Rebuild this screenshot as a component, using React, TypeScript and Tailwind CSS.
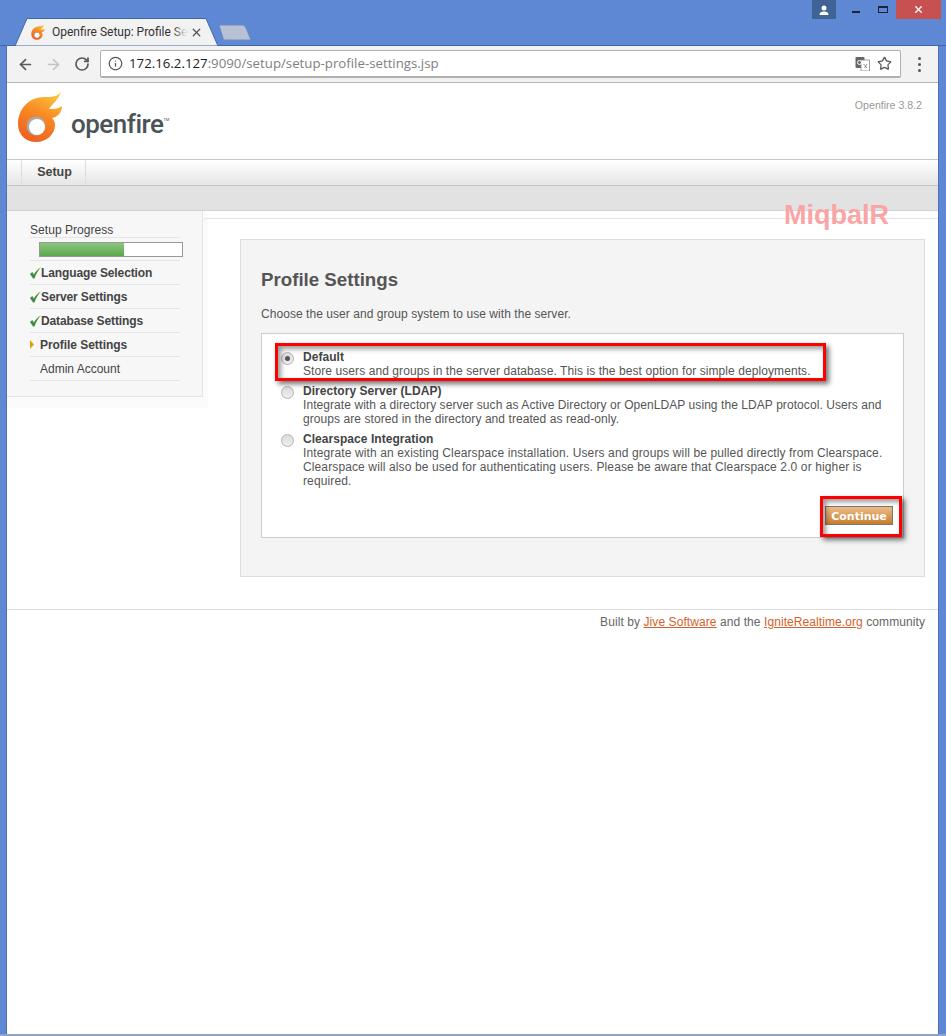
import { ArrowLeft, ArrowRight, RotateCw, Info, Star, X } from "lucide-react";

function Flame({ size = 46 }: { size?: number }) {
  return (
    <svg width={size} height={(size * 53) / 46} viewBox="17 90 46 53">
      <defs>
        <linearGradient id="fl" x1="0.7" y1="0" x2="0.3" y2="1">
          <stop offset="0" stopColor="#fdc43c" />
          <stop offset="0.45" stopColor="#f78a24" />
          <stop offset="1" stopColor="#ef5f22" />
        </linearGradient>
      </defs>
      <path
        fill="url(#fl)"
        d="M61 91C59 97 51 97 44 97C29 97 18 109 18 124C18 135 26 142 36 142C47 142 55 134 55 125C55 122 54 120 52 118C58 117 62 112 62 106C58 109 53 109 49 109C52 104 59 100 61 91Z"
      />
      <circle cx="36" cy="126" r="9.5" fill="#a9a9a9" />
      <circle cx="37" cy="127" r="8" fill="#ffffff" />
    </svg>
  );
}

function Check() {
  return (
    <svg width="11" height="12" viewBox="0 0 11 12" className="flex-none">
      <path d="M0 7L2.200 5L4 7.500C5.500 4.500 8 2 11 0.500C8 3.500 6 7 4.500 11.500H3Z" fill="#3f8f3f" />
    </svg>
  );
}

function Row({ label, state }: { label: string; state: "done" | "current" | "todo" }) {
  return (
    <div className="flex h-[24px] items-center border-b border-[#e4e4e4] text-[12px] text-[#444]">
      {state === "done" && (
        <div className="flex items-center">
          <Check />
          <span className="font-bold tracking-[-0.12px]">{label}</span>
        </div>
      )}
      {state === "current" && (
        <div className="flex items-center">
          <svg width="10" height="9" viewBox="0 0 10 9" className="flex-none">
            <path d="M0 0L4 4.500L0 9Z" fill="#d9a20b" />
          </svg>
          <span className="font-bold tracking-[-0.05px]">{label}</span>
        </div>
      )}
      {state === "todo" && <span className="pl-[10px]">{label}</span>}
    </div>
  );
}

function Radio({ on }: { on?: boolean }) {
  return (
    <div className="mt-[2px] flex h-[13px] w-[13px] flex-none items-center justify-center rounded-full border border-[#b4b4b4] bg-gradient-to-b from-[#dcdcdc] to-[#eeeeee]">
      {on && <div className="h-[5px] w-[5px] rounded-full bg-[#555]" />}
    </div>
  );
}

function Option({
  on,
  title,
  spacing,
  children,
}: {
  on?: boolean;
  title: string;
  spacing: string;
  children: React.ReactNode;
}) {
  return (
    <div className="flex gap-[9px]">
      <Radio on={on} />
      <div className={`w-[584px] text-[12px] leading-[14px] text-[#555] ${spacing}`}>
        <div className="font-bold tracking-[0.05px] text-[#444]">{title}</div>
        {children}
      </div>
    </div>
  );
}

export default function App() {
  return (
    <div className="relative flex h-[1036px] w-[946px] flex-col overflow-hidden bg-[#5f88d4] font-['Liberation_Sans',Arial,sans-serif]">
      {/* Title bar */}
      <div className="flex h-[46px] flex-none items-start border-b border-[#3f68a8]">
        <div className="relative ml-[15px] mt-[18px] flex h-[28px] w-[203px] flex-none items-center pl-[16px] pr-[15px]">
          <svg className="absolute inset-0" width="203" height="28" viewBox="0 0 203 28">
            <path d="M0 28L12 0.5H191L203 28Z" fill="#f2f2f2" stroke="#3f68a8" />
          </svg>
          <div className="relative flex-none">
            <Flame size={14} />
          </div>
          <div className="relative ml-[7px] whitespace-nowrap font-['Roboto',sans-serif] text-[12px] text-[#333]">
            Openfire Setup: Profile Se
            <div className="absolute inset-y-0 right-0 w-[14px] bg-gradient-to-r from-transparent to-[#f2f2f2]" />
          </div>
          <X size={13} strokeWidth={2.4} className="relative ml-auto text-[#555]" />
        </div>
        <svg className="mt-[24px] flex-none" width="34" height="17" viewBox="0 0 34 17">
          <path d="M1 1H24C26 1 27 2 28 4L33 16H7C6 16 5.500 15 5 14Z" fill="#b7c1d6" stroke="#6f8ab8" />
        </svg>
        <div className="ml-auto mr-[5px] flex items-start">
          <div className="flex h-[19px] w-[24px] items-center justify-center bg-[#3f6297]">
            <svg width="10" height="10" viewBox="0 0 10 10">
              <circle cx="5" cy="3" r="2.500" fill="#fff" />
              <path d="M0.500 10C0.500 7 3 6.500 5 6.500C7 6.500 9.500 7 9.500 10Z" fill="#fff" />
            </svg>
          </div>
          <div className="ml-[16px] mt-[11px] h-[2px] w-[8px] bg-[#1a2438]" />
          <div className="ml-[18px] mt-[6px] h-[7px] w-[10px] border border-t-2 border-[#1a2438]" />
          <div className="ml-[8px] flex h-[19px] w-[45px] items-center justify-center bg-[#c75050]">
            <X size={11} strokeWidth={3} className="text-white" />
          </div>
        </div>
      </div>

      {/* Window */}
      <div className="ml-[7px] mr-[8px] flex flex-1 flex-col bg-white shadow-[-1px_0_0_#4a72b4,1px_0_0_#4a72b4]">
        {/* Toolbar */}
        <div className="flex h-[37px] flex-none items-center border-b border-[#b5b5b5] bg-[#f2f2f2]">
          <ArrowLeft size={17} strokeWidth={2.4} className="ml-[10px] text-[#5a5a5a]" />
          <ArrowRight size={17} strokeWidth={2.4} className="ml-[11px] text-[#c4c4c4]" />
          <RotateCw size={16} strokeWidth={2.6} className="ml-[12px] text-[#5a5a5a]" />
          <div className="ml-[10px] flex h-[28px] w-[801px] flex-none items-center rounded-[2px] border border-b-2 border-[#b0b0b0] bg-white pl-[7px] pr-[6px]">
            <Info size={15} strokeWidth={2} className="text-[#555]" />
            <span className="ml-[6px] whitespace-nowrap font-['Open_Sans',sans-serif] text-[13.25px] text-[#222]">
              172.16.2.127<span className="text-[#808080]">:9090/setup/setup-profile-settings.jsp</span>
            </span>
            <svg className="ml-auto" width="15" height="14" viewBox="0 0 15 14">
              <rect x="0.500" y="0" width="9" height="11" rx="1" fill="#666" />
              <rect x="6" y="3" width="8.500" height="11" fill="#fff" stroke="#888" strokeWidth="0.800" />
              <circle cx="4.500" cy="5.500" r="2" fill="none" stroke="#fff" strokeWidth="1" />
              <path d="M8.500 7L12 11M12 7L9.500 11" stroke="#777" strokeWidth="0.800" />
            </svg>
            <Star size={15} strokeWidth={2} className="ml-[7px] mr-[2px] text-[#555]" />
          </div>
          <div className="ml-[17px] flex flex-col gap-[3px]">
            <div className="h-[3px] w-[3px] rounded-full bg-[#555]" />
            <div className="h-[3px] w-[3px] rounded-full bg-[#555]" />
            <div className="h-[3px] w-[3px] rounded-full bg-[#555]" />
          </div>
        </div>

        {/* Page header */}
        <div className="flex h-[76px] flex-none justify-between pl-[10px] pr-[16px]">
          <div className="flex items-start pt-[7px]">
            <Flame />
            <div className="ml-[8px] mt-[15px] flex items-start font-['Roboto',sans-serif] text-[#4a5358]">
              <span className="text-[26px] font-medium leading-[38px] tracking-[-0.5px]">openfire</span>
              <span className="mt-[12px] text-[4px] leading-[6px]">TM</span>
            </div>
          </div>
          <div className="pt-[16px] text-[10.6px] leading-[12px] text-[#999]">Openfire 3.8.2</div>
        </div>

        {/* Tabs */}
        <div className="flex h-[27px] flex-none border-y border-b-[#c4c4c4] border-t-[#c8c8c8] bg-gradient-to-b from-white to-[#e6e6e6] pl-[14px]">
          <div className="flex w-[65px] items-center justify-center border-x border-[#dedede] pl-[2px] text-[12.500px] font-bold text-[#444]">
            Setup
          </div>
        </div>

        {/* Gray bar */}
        <div className="h-[25px] flex-none border-b border-[#d4d4d4] bg-[#e2e2e2]" />

        {/* Body */}
        <div className="flex flex-none">
          <div className="h-[197px] w-[201px] flex-none bg-[#fbfbfb]">
            <div className="h-[186px] w-[196px] border-b border-r border-[#e4e4e4] bg-[#f7f7f7] pl-[23px] pt-[12px]">
              <div className="w-[150px]">
                <div className="h-[15px] border-b border-[#e4e4e4] text-[12px] leading-[14px] tracking-[0.05px] text-[#444]">
                  Setup Progress
                </div>
                <div className="h-[23px] border-b border-[#e4e4e4] pl-[9px] pt-[4px]">
                  <div className="h-[15px] w-[144px] border border-[#999] bg-white">
                    <div className="h-full w-[84px] bg-gradient-to-b from-[#8cc57f] to-[#5aa84a]" />
                  </div>
                </div>
                <Row label="Language Selection" state="done" />
                <Row label="Server Settings" state="done" />
                <Row label="Database Settings" state="done" />
                <Row label="Profile Settings" state="current" />
                <Row label="Admin Account" state="todo" />
              </div>
            </div>
          </div>

          <div className="relative ml-[-5px] mt-[7px] flex-1 rounded-tl-[4px] border-t border-[#e4e4e4] pl-[37px] pr-[13px] pt-[20px]">
            <div className="h-[338px] border border-[#ddd] bg-[#f4f4f4] px-[20px] pt-[28px]">
              <h1 className="text-[18.7px] font-bold leading-[24px] text-[#555]">Profile Settings</h1>
              <p className="mb-[12px] mt-[15px] text-[12px] leading-[14px] tracking-[0.055px] text-[#555]">
                Choose the user and group system to use with the server.
              </p>
              <div className="h-[205px] border border-[#ccc] bg-white pl-[19px] pr-[10px] pt-[16px]">
                <div className="flex flex-col gap-[6px]">
                  <Option on title="Default" spacing="tracking-[0.08px]">
                    Store users and groups in the server database. This is the best option for simple deployments.
                  </Option>
                  <Option title="Directory Server (LDAP)" spacing="tracking-[0.07px]">
                    Integrate with a directory server such as Active Directory or OpenLDAP using the LDAP protocol. Users and groups are stored in the directory and treated as read-only.
                  </Option>
                  <Option title="Clearspace Integration" spacing="tracking-[0.12px]">
                    Integrate with an existing Clearspace installation. Users and groups will be pulled directly from Clearspace. Clearspace will also be used for authenticating users. Please be aware that Clearspace 2.0 or higher is required.
                  </Option>
                </div>
                <div className="mt-[18px] flex justify-end">
                  <button className="h-[19px] w-[68px] border border-[#777] bg-gradient-to-b from-[#ecbd88] to-[#c67d28] pt-[1px] font-['DejaVu_Sans',sans-serif] text-[11px] font-bold leading-[15px] text-white">
                    Continue
                  </button>
                </div>
              </div>
            </div>
          </div>
        </div>

        {/* Footer */}
        <div className="mt-[32px] flex-none border-t border-[#ddd] pr-[13px] pt-[5px] text-right text-[12px] leading-[14px] tracking-[0.08px] text-[#666]">
          Built by <a className="text-[#d2622a] underline">Jive Software</a> and the{" "}
          <a className="text-[#d2622a] underline">IgniteRealtime.org</a> community
        </div>
      </div>

      {/* Bottom edge */}
      <div className="h-[2px] flex-none bg-[#8ea3c8]" />

      {/* Annotations */}
      <div className="absolute left-[784px] top-[200px] text-[27px] font-bold leading-[31px] text-[#f9a5a5]">MiqbalR</div>
      <div className="absolute left-[275px] top-[343px] h-[38px] w-[551px] border-[3px] border-[#f00] shadow-[3px_3px_5px_rgba(0,0,0,0.55),inset_3px_3px_5px_rgba(0,0,0,0.4)]" />
      <div className="absolute left-[820px] top-[496px] h-[41px] w-[82px] border-[3px] border-[#f00] shadow-[3px_3px_5px_rgba(0,0,0,0.55),inset_3px_3px_5px_rgba(0,0,0,0.4)]" />
    </div>
  );
}
